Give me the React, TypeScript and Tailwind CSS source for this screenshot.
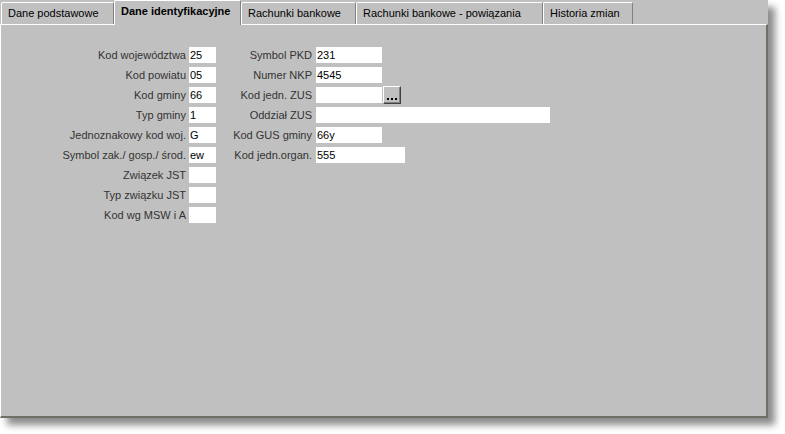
import React from 'react';

const tabs = [
  { label: 'Dane podstawowe', width: 'w-[113px]' },
  { label: 'Dane identyfikacyjne', width: 'w-[127px]', active: true },
  { label: 'Rachunki bankowe', width: 'w-[115px]' },
  { label: 'Rachunki bankowe - powiązania', width: 'w-[187px]' },
  { label: 'Historia zmian', width: 'w-[90px]' },
];

const leftFields = [
  { label: 'Kod województwa', value: '25' },
  { label: 'Kod powiatu', value: '05' },
  { label: 'Kod gminy', value: '66' },
  { label: 'Typ gminy', value: '1' },
  { label: 'Jednoznakowy kod woj.', value: 'G' },
  { label: 'Symbol zak./ gosp./ środ.', value: 'ew' },
  { label: 'Związek JST', value: '' },
  { label: 'Typ związku JST', value: '' },
  { label: 'Kod wg MSW i A', value: '' },
];

type RightField = { label: string; value: string; width: string; button?: boolean };

const rightFields: RightField[] = [
  { label: 'Symbol PKD', value: '231', width: 'w-[66px]' },
  { label: 'Numer NKP', value: '4545', width: 'w-[66px]' },
  { label: 'Kod jedn. ZUS', value: '', width: 'w-[66px]', button: true },
  { label: 'Oddział ZUS', value: '', width: 'w-[234px]' },
  { label: 'Kod GUS gminy', value: '66y', width: 'w-[66px]' },
  { label: 'Kod jedn.organ.', value: '555', width: 'w-[89px]' },
];

const Tab: React.FC<{ label: string; width: string; active?: boolean }> = ({ label, width, active }) =>
  active ? (
    <div
      className={`${width} relative z-10 h-[25px] -mb-px flex items-start pl-[6px] pt-[4px] bg-[#c0c0c0] border-t border-l border-white border-r border-r-[#808080] rounded-tl-[2px] rounded-tr-[2px] font-bold text-black`}
    >
      {label}
    </div>
  ) : (
    <div
      className={`${width} h-[22px] mt-[2px] flex items-center pl-[6px] bg-[#c0c0c0] border-t border-l border-white border-r border-r-[#808080] rounded-tl-[2px] rounded-tr-[2px] text-black`}
    >
      {label}
    </div>
  );

export default function App() {
  return (
    <div className="w-[785px] h-[434px] bg-white font-['Liberation_Sans',Arial,sans-serif] text-[11px] leading-[13px]">
      <div className="w-[768px] h-[418px] flex flex-col bg-[#c0c0c0] shadow-[7px_7px_7px_rgba(0,0,0,0.45)]">
        <div className="h-[24px] flex items-end pl-[1px]">
          {tabs.map((t) => (
            <Tab key={t.label} {...t} />
          ))}
        </div>
        <div className="flex-1 flex border-t border-l border-white border-r-2 border-r-[#6f6f68] border-b-2 border-b-[#6f6f68] pt-[22px]">
          <div className="flex flex-col">
            {leftFields.map((f) => (
              <div key={f.label} className="h-[20px] flex items-start">
                <div className="w-[188px] h-[16px] flex items-center justify-end pr-[3px] text-[#333]">{f.label}</div>
                <div className="w-[27px] h-[16px] bg-white flex items-center pl-[1px] text-black">{f.value}</div>
              </div>
            ))}
          </div>
          <div className="flex flex-col">
            {rightFields.map((f) => (
              <div key={f.label} className="h-[20px] flex items-start">
                <div className="w-[100px] h-[16px] flex items-center justify-end pr-[4px] text-[#333]">{f.label}</div>
                <div className={`${f.width} h-[16px] bg-white flex items-center pl-[1px] text-black`}>{f.value}</div>
                {f.button && (
                  <div className="ml-[1px] -mt-[1px] w-[18px] h-[18px] bg-[#c0c0c0] border border-t-white border-l-white border-r-[#404040] border-b-[#404040] shadow-[inset_-1px_-1px_0_#808080] flex items-end justify-center pb-[2px]">
                    <svg width="10" height="3" viewBox="0 0 10 3">
                      <rect x="0" y="0" width="2" height="2" fill="#000" />
                      <rect x="4" y="0" width="2" height="2" fill="#000" />
                      <rect x="8" y="0" width="2" height="2" fill="#000" />
                    </svg>
                  </div>
                )}
              </div>
            ))}
          </div>
        </div>
      </div>
    </div>
  );
}
